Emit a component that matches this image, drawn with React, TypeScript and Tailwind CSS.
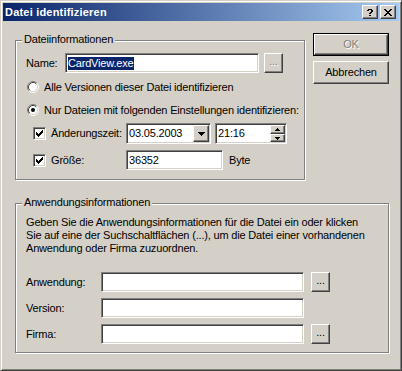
import React from 'react';

const CHECK = ['......x', '.....xx', 'x...xxx', 'xx.xxx.', 'xxxxx..', '.xxx...', '..x....'];
const CLOSE = ['xx....xx', '.xx..xx.', '..xxxx..', '...xx...', '..xxxx..', '.xx..xx.', 'xx....xx'];
const HELP = ['.xxxx.', 'xx..xx', '....xx', '...xx.', '..xx..', '......', '..xx..'];
const DOWN = ['xxxxxxx', '.xxxxx.', '..xxx..', '...x...'];
const SPIN_UP = ['..x..', '.xxx.', 'xxxxx'];
const SPIN_DOWN = ['xxxxx', '.xxx.', '..x..'];

function Pix({ rows, color = '#000' }: { rows: string[]; color?: string }) {
  const w = rows[0].length;
  const h = rows.length;
  return (
    <svg width={w} height={h} viewBox={`0 0 ${w} ${h}`} shapeRendering="crispEdges" className="block">
      {rows.flatMap((r, y) =>
        r.split('').map((c, x) =>
          c === 'x' ? <rect key={`${x}-${y}`} x={x} y={y} width={1} height={1} fill={color} /> : null
        )
      )}
    </svg>
  );
}

const raised =
  'border border-t-white border-l-white border-b-[#404040] border-r-[#404040] shadow-[inset_-1px_-1px_0_#808080] bg-[#d4d0c8]';
const sunken =
  'border border-t-[#808080] border-l-[#808080] border-b-white border-r-white shadow-[inset_1px_1px_0_#404040,inset_-1px_-1px_0_#d4d0c8] bg-white';

function TitleBtn({ rows }: { rows: string[] }) {
  return (
    <div className={`w-[16px] h-[14px] flex items-center justify-center ${raised}`}>
      <Pix rows={rows} />
    </div>
  );
}

function Radio({ checked }: { checked?: boolean }) {
  return (
    <svg width="12" height="12" viewBox="0 0 12 12" className="block shrink-0">
      <circle cx="6" cy="6" r="5" fill="#fff" />
      <path d="M2.11 9.89 A5.5 5.5 0 0 1 9.89 2.11" fill="none" stroke="#808080" />
      <path d="M9.89 2.11 A5.5 5.5 0 0 1 2.11 9.89" fill="none" stroke="#fff" />
      <path d="M2.82 9.18 A4.5 4.5 0 0 1 9.18 2.82" fill="none" stroke="#404040" />
      <path d="M9.18 2.82 A4.5 4.5 0 0 1 2.82 9.18" fill="none" stroke="#d4d0c8" />
      {checked && <circle cx="6" cy="6" r="2" fill="#000" />}
    </svg>
  );
}

function Check() {
  return (
    <div className={`w-[13px] h-[13px] shrink-0 flex items-center justify-center ${sunken}`}>
      <Pix rows={CHECK} />
    </div>
  );
}

function Dots({ disabled }: { disabled?: boolean }) {
  return (
    <div className={`w-[19px] h-[20px] flex items-end justify-center pb-[4px] ${raised}`}>
      <span className={disabled ? 'text-[#808080] [text-shadow:1px_1px_0_#fff]' : 'text-black'}>...</span>
    </div>
  );
}

function Group({ title, className, children }: { title: string; className: string; children: React.ReactNode }) {
  return (
    <div className={`relative shrink-0 border border-[#808080] shadow-[1px_1px_0_#fff,inset_1px_1px_0_#fff] ${className}`}>
      <span className="absolute left-[6px] -top-[8px] bg-[#d4d0c8] px-[2px] whitespace-nowrap">{title}</span>
      {children}
    </div>
  );
}

export default function App() {
  return (
    <div className="w-[402px] h-[371px] flex flex-col bg-[#d4d0c8] border border-t-[#d4d0c8] border-l-[#d4d0c8] border-r-[#404040] border-b-[#404040] shadow-[inset_1px_1px_0_#fff,inset_-1px_-1px_0_#808080] p-[2px] font-['Liberation_Sans',Arial,sans-serif] text-[11px] leading-[13px] text-black select-none whitespace-nowrap">
      {/* title bar */}
      <div className="h-[18px] shrink-0 flex items-center justify-between bg-[linear-gradient(to_right,#0a246a,#a6caf0)] pl-[2px] pr-[3px]">
        <span className="text-white font-bold tracking-[0.2px]">Datei identifizieren</span>
        <div className="flex gap-[2px]">
          <TitleBtn rows={HELP} />
          <TitleBtn rows={CLOSE} />
        </div>
      </div>

      <div className="flex-1 pl-[12px] pt-[12px] tracking-[-0.18px]">
        <div className="flex items-start">
          <Group title="Dateiinformationen" className="mt-[7px] w-[290px] h-[140px]">
            <div className="flex flex-col pl-[10px] pt-[12px]">
              <div className="flex items-center h-[20px]">
                <span className="w-[39px]">Name:</span>
                <div className={`w-[194px] h-[20px] flex items-center pl-[2px] ${sunken}`}>
                  <span className="bg-[#0a246a] text-white">CardView.exe</span>
                </div>
                <div className="ml-[5px]">
                  <Dots disabled />
                </div>
              </div>

              <div className="flex items-center h-[16px] mt-[6px] ml-[1px] gap-[5px]">
                <Radio />
                <span>Alle Versionen dieser Datei identifizieren</span>
              </div>
              <div className="flex items-center h-[16px] mt-[7px] ml-[1px] gap-[5px]">
                <Radio checked />
                <span>Nur Dateien mit folgenden Einstellungen identifizieren:</span>
              </div>

              <div className="flex items-center h-[21px] mt-[5px] ml-[7px]">
                <Check />
                <span className="ml-[5px] w-[75px]">Änderungszeit:</span>
                <div className={`w-[85px] h-[21px] flex items-center justify-between pl-[2px] ${sunken}`}>
                  <span>03.05.2003</span>
                  <div className={`w-[16px] h-[17px] mr-[1px] flex items-center justify-center ${raised}`}>
                    <Pix rows={DOWN} />
                  </div>
                </div>
                <div className={`ml-[4px] w-[72px] h-[21px] flex items-center justify-between pl-[2px] ${sunken}`}>
                  <span>21:16</span>
                  <div className="flex flex-col mr-[1px]">
                    <div className={`w-[15px] h-[9px] flex items-center justify-center ${raised}`}>
                      <Pix rows={SPIN_UP} />
                    </div>
                    <div className={`w-[15px] h-[8px] flex items-center justify-center ${raised}`}>
                      <Pix rows={SPIN_DOWN} />
                    </div>
                  </div>
                </div>
              </div>

              <div className="flex items-center h-[20px] mt-[6px] ml-[7px]">
                <Check />
                <span className="ml-[5px] w-[75px]">Größe:</span>
                <div className={`w-[97px] h-[20px] flex items-center pl-[2px] ${sunken}`}>
                  <span>36352</span>
                </div>
                <span className="ml-[6px]">Byte</span>
              </div>
            </div>
          </Group>

          <div className="ml-[8px] flex flex-col gap-[5px]">
            <div className="w-[76px] h-[23px] border border-black">
              <div className={`w-full h-full flex items-center justify-center ${raised}`}>
                <span className="text-[#808080] [text-shadow:1px_1px_0_#fff]">OK</span>
              </div>
            </div>
            <div className={`w-[76px] h-[23px] flex items-center justify-center ${raised}`}>
              <span>Abbrechen</span>
            </div>
          </div>
        </div>

        <Group title="Anwendungsinformationen" className="mt-[23px] w-[374px] h-[150px]">
          <div className="flex flex-col pl-[10px] pt-[12px]">
            <p>
              Geben Sie die Anwendungsinformationen für die Datei ein oder klicken
              <br />
              Sie auf eine der Suchschaltflächen (...), um die Datei einer vorhandenen
              <br />
              Anwendung oder Firma zuzuordnen.
            </p>
            <div className="flex flex-col gap-[6px] mt-[17px]">
              {['Anwendung:', 'Version:', 'Firma:'].map((label, i) => (
                <div key={label} className="flex items-center h-[20px]">
                  <span className="w-[75px]">{label}</span>
                  <div className={`w-[203px] h-[20px] ${sunken}`} />
                  {i !== 1 && (
                    <div className="ml-[7px]">
                      <Dots />
                    </div>
                  )}
                </div>
              ))}
            </div>
          </div>
        </Group>
      </div>
    </div>
  );
}
